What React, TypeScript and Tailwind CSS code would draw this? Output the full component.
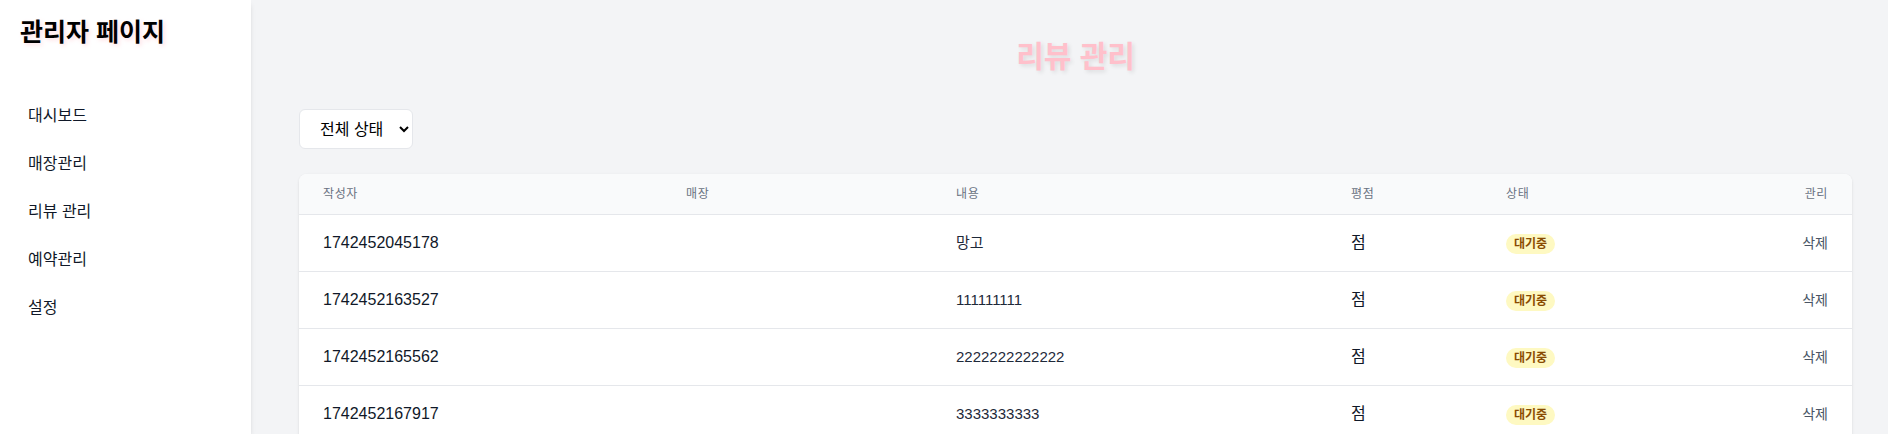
import { useState } from "react";

interface Review {
  id: string;
  store: string;
  content: string;
  rating: string;
  status: string;
}

const menuItems = ["대시보드", "매장관리", "리뷰 관리", "예약관리", "설정"];

const reviews: Review[] = [
  { id: "1742452045178", store: "", content: "망고", rating: "", status: "대기중" },
  { id: "1742452163527", store: "", content: "111111111", rating: "", status: "대기중" },
  { id: "1742452165562", store: "", content: "2222222222222", rating: "", status: "대기중" },
  { id: "1742452167917", store: "", content: "3333333333", rating: "", status: "대기중" },
];

const columns = ["작성자", "매장", "내용", "평점", "상태", "관리"];

function Sidebar() {
  return (
    <aside className="w-[251px] shrink-0 h-screen bg-white shadow-md z-10 px-5 pt-4">
      <h1 className="text-[25px] leading-8 font-bold text-black [text-shadow:2px_2px_4px_rgba(255,182,193,0.45)]">관리자 페이지</h1>
      <nav className="mt-[44px]">
        {menuItems.map((item) => (
          <div key={item} className="px-2 py-3 text-base leading-6 text-gray-900 cursor-pointer rounded hover:bg-gray-100">
            {item}
          </div>
        ))}
      </nav>
    </aside>
  );
}

export default function App() {
  const [filter, setFilter] = useState("all");

  return (
    <div className="flex h-screen overflow-hidden bg-gray-100 font-['Liberation_Sans','Noto_Sans_CJK_KR',sans-serif]">
      <Sidebar />

      <main className="flex-1 min-w-0 pl-12 pr-9 pt-[39px]">
        <h2 className="text-center text-3xl font-bold text-[#ffc0cb] [text-shadow:2px_2px_4px_rgba(0,0,0,0.1)]">리뷰 관리</h2>

        <div className="mt-[34px]">
          <select
            value={filter}
            onChange={(e) => setFilter(e.target.value)}
            className="h-10 w-[114px] pl-4 pr-2 bg-white border border-gray-200 rounded-md text-base text-black"
          >
            <option value="all">전체 상태</option>
            <option value="pending">대기중</option>
            <option value="approved">승인</option>
            <option value="rejected">거절</option>
          </select>
        </div>

        {/* Table */}
        <div className="mt-[25px] bg-white rounded-lg shadow-sm overflow-hidden">
          <table className="w-full table-fixed">
            <colgroup>
              <col className="w-[363px]" />
              <col className="w-[270px]" />
              <col className="w-[395px]" />
              <col className="w-[155px]" />
              <col className="w-[250px]" />
              <col className="w-[120px]" />
            </colgroup>
            <thead className="bg-gray-50 border-b border-gray-200">
              <tr>
                {columns.map((c, i) => (
                  <th
                    key={c}
                    className={`px-6 py-3 text-xs leading-4 font-normal text-gray-500 tracking-wider ${i === 5 ? "text-right" : "text-left"}`}
                  >
                    {c}
                  </th>
                ))}
              </tr>
            </thead>
            <tbody>
              {reviews.map((r) => (
                <tr key={r.id} className="border-b border-gray-200">
                  <td className="px-6 py-4 text-base leading-6 text-gray-900">{r.id}</td>
                  <td className="px-6 py-4 text-sm leading-6 text-gray-900">{r.store}</td>
                  <td className="px-6 py-4 text-[15px] leading-6 text-gray-800">{r.content}</td>
                  <td className="px-6 py-4 text-base leading-6 text-gray-900">{r.rating}점</td>
                  <td className="px-6 py-4">
                    <span className="inline-flex px-2 text-xs leading-5 font-semibold rounded-full bg-yellow-100 text-yellow-800">
                      {r.status}
                    </span>
                  </td>
                  <td className="px-6 py-4 text-sm leading-6 text-right text-gray-600">
                    <button className="cursor-pointer hover:text-red-600">삭제</button>
                  </td>
                </tr>
              ))}
            </tbody>
          </table>
        </div>
      </main>
    </div>
  );
}
